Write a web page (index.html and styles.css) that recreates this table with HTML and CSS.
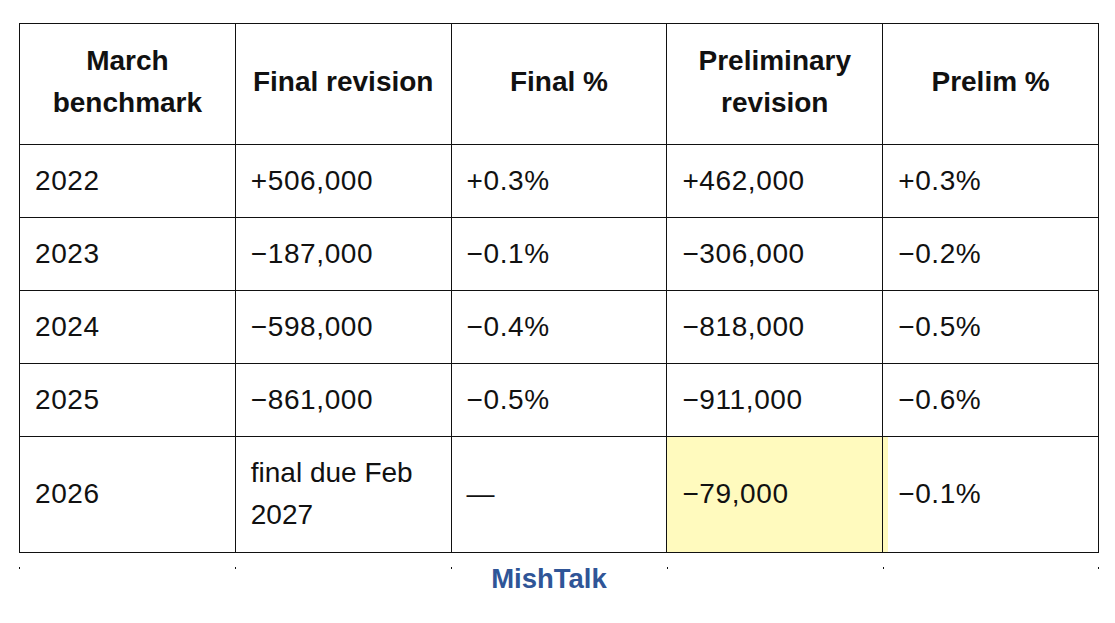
FILE: index.html
```html
<!DOCTYPE html>
<html lang="en">
<head>
<meta charset="utf-8">
<title>March benchmark revisions</title>
<link rel="stylesheet" href="styles.css">
</head>
<body>
<div class="page">
  <table class="revisions">
    <thead>
      <tr>
        <th>March<br>benchmark</th>
        <th>Final revision</th>
        <th>Final %</th>
        <th>Preliminary<br>revision</th>
        <th>Prelim %</th>
      </tr>
    </thead>
    <tbody>
      <tr><td>2022</td><td>+506,000</td><td>+0.3%</td><td>+462,000</td><td>+0.3%</td></tr>
      <tr><td>2023</td><td>−187,000</td><td>−0.1%</td><td>−306,000</td><td>−0.2%</td></tr>
      <tr><td>2024</td><td>−598,000</td><td>−0.4%</td><td>−818,000</td><td>−0.5%</td></tr>
      <tr><td>2025</td><td>−861,000</td><td>−0.5%</td><td>−911,000</td><td>−0.6%</td></tr>
      <tr class="tall"><td>2026</td><td class="note">final due Feb 2027</td><td>—</td><td class="hl">−79,000</td><td>−0.1%</td></tr>
    </tbody>
  </table>
  <div class="ticks"><span></span><span></span><span></span><span></span><span></span></div>
  <div class="brand">MishTalk</div>
</div>
</body>
</html>
```

FILE: styles.css
```css
html, body {
  margin: 0;
  padding: 0;
  background: #ffffff;
}

body {
  font-family: "Liberation Sans", Arial, sans-serif;
  color: #111111;
}

.page {
  padding: 23px 16px 0 19px;
}

.revisions {
  width: 1080px;
  border-collapse: collapse;
  table-layout: fixed;
}

.revisions th,
.revisions td {
  border: 1px solid #111111;
  font-size: 28px;
  line-height: 42px;
  vertical-align: middle;
  text-align: left;
}

.revisions th {
  font-weight: 700;
  text-align: center;
  padding: 16px 15px 20px;
}

.revisions td {
  padding: 15px;
  letter-spacing: 0.6px;
}

.revisions .tall td {
  padding-bottom: 16px;
}

.revisions td.note {
  letter-spacing: 0;
}

.revisions td.hl {
  background: #fffabe;
  box-shadow: 5px 0 0 #fffabe;
}

.ticks {
  display: grid;
  grid-template-columns: repeat(5, 216px);
  width: 1080px;
  height: 2px;
  margin-top: 14px;
}

.ticks span {
  border-left: 1px solid #111111;
}

.ticks span:last-child {
  border-right: 1px solid #111111;
}

.brand {
  width: 1060px;
  text-align: center;
  font-size: 27.5px;
  font-weight: 700;
  color: #2f5597;
  line-height: 30px;
  margin-top: -5px;
}
```
